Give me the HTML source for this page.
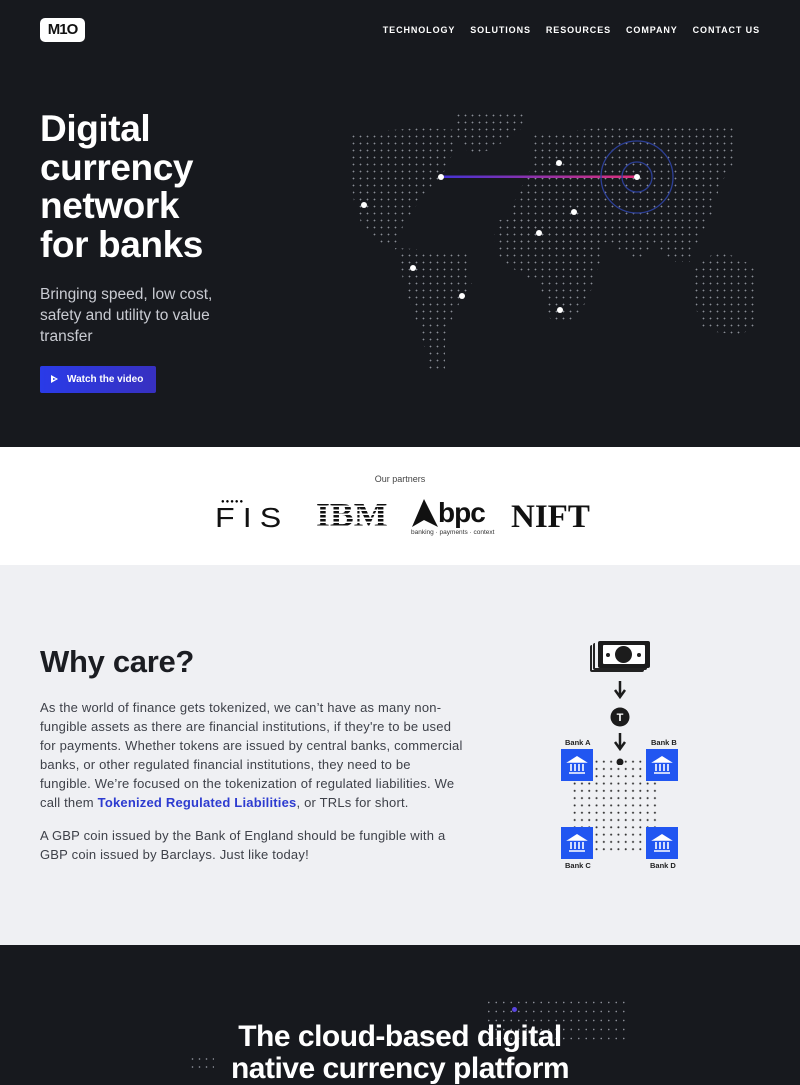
<!DOCTYPE html>
<html><head><meta charset="utf-8"><style>
*{margin:0;padding:0;box-sizing:border-box}
body{width:800px;height:1069px;overflow:hidden;font-family:"Liberation Sans",sans-serif;background:#17191e}
.hero{position:relative;height:447px;background:#17191e;color:#fff}
.logo{position:absolute;left:40px;top:18px;width:45px;height:24px;background:#fff;border-radius:5px;color:#111;font-weight:bold;font-size:15px;text-align:center;line-height:24px;letter-spacing:-1px}
.nav{position:absolute;right:40px;top:25px;font-size:9px;font-weight:bold;letter-spacing:0.9px}
.nav span{margin-left:15px}
h1{position:absolute;left:40px;top:110px;font-size:37px;line-height:38.5px;letter-spacing:-0.4px;font-weight:bold}
.sub{position:absolute;left:40px;top:284px;font-size:15.5px;line-height:21px;color:#c9cbd2;width:200px}
.btn{position:absolute;left:40px;top:366px;width:116px;height:27px;background:linear-gradient(90deg,#2a3be8,#3730c0);border-radius:2px;font-size:10px;font-weight:bold;line-height:27px;padding-left:27px}
.btn:before{content:"";position:absolute;left:11px;top:9px;border-left:7px solid #fff;border-top:4.5px solid transparent;border-bottom:4.5px solid transparent}
.btn:after{content:"";position:absolute;left:13px;top:12px;border-left:3px solid #2a3be8;border-top:1.5px solid transparent;border-bottom:1.5px solid transparent}
.land{position:absolute;left:0;top:0;width:800px;height:447px;background-image:radial-gradient(circle,#8a8d96 0.7px,transparent 1px);background-size:7px 7px;background-position:0 0}
.pt{position:absolute;width:6px;height:6px;border-radius:50%;background:#fff;margin:-3px 0 0 -3px}
.partners{height:118px;background:#fff;position:relative}
.wc{height:380px;background:#eff0f3;position:relative;color:#1b1d22}
.p{position:absolute;left:40px;font-size:13px;line-height:19px;color:#3e4149;white-space:nowrap;letter-spacing:0.2px}
.bank{position:absolute;width:32px;height:32px;background:#2156f1}
.bl{position:absolute;font-size:7.5px;font-weight:bold;color:#222}
</style></head><body>
<div class="hero">
<div class="logo">M1O</div>
<div class="nav"><span>TECHNOLOGY</span><span>SOLUTIONS</span><span>RESOURCES</span><span>COMPANY</span><span>CONTACT US</span></div>
<div class="land" style="clip-path:polygon(348px 133px,420px 128px,460px 130px,452px 155px,440px 180px,420px 200px,405px 222px,395px 245px,380px 245px,365px 230px,355px 210px,350px 170px)"></div>
<div class="land" style="clip-path:polygon(455px 112px,525px 112px,520px 132px,490px 150px,470px 155px,455px 135px)"></div>
<div class="land" style="clip-path:polygon(395px 248px,470px 252px,472px 285px,455px 310px,445px 340px,445px 370px,430px 370px,420px 330px,405px 290px,400px 265px)"></div>
<div class="land" style="clip-path:polygon(530px 135px,600px 128px,735px 128px,738px 155px,720px 185px,712px 215px,700px 235px,690px 262px,670px 262px,655px 245px,640px 260px,620px 250px,610px 240px,590px 250px,560px 250px,520px 245px,510px 210px,530px 170px)"></div>
<div class="land" style="clip-path:polygon(495px 220px,605px 218px,600px 262px,588px 300px,570px 322px,552px 325px,540px 285px,502px 262px,494px 240px)"></div>
<div class="land" style="clip-path:polygon(695px 265px,720px 250px,758px 268px,758px 325px,740px 335px,700px 330px,695px 300px)"></div>
<svg style="position:absolute;left:0;top:0" width="800" height="447"><defs><linearGradient id="g" x1="0" x2="1"><stop offset="0" stop-color="#4433d6"/><stop offset="1" stop-color="#e0307a"/></linearGradient></defs>
<rect x="441" y="175.5" width="196" height="2.5" fill="url(#g)"/>
<circle cx="637" cy="177" r="36" fill="none" stroke="#2c3f96" stroke-width="1.3"/>
<circle cx="637" cy="177" r="15" fill="none" stroke="#2c3f96" stroke-width="1.3"/></svg>
<div class="pt" style="left:441px;top:177px"></div><div class="pt" style="left:637px;top:177px"></div>
<div class="pt" style="left:559px;top:163px"></div><div class="pt" style="left:364px;top:205px"></div>
<div class="pt" style="left:574px;top:212px"></div><div class="pt" style="left:539px;top:233px"></div>
<div class="pt" style="left:413px;top:268px"></div><div class="pt" style="left:462px;top:296px"></div>
<div class="pt" style="left:560px;top:310px"></div>
<h1>Digital<br>currency<br>network<br>for banks</h1>
<div class="sub">Bringing speed, low cost, safety and utility to value transfer</div>
<div class="btn">Watch the video</div>
</div>
<div class="partners">
<div style="position:absolute;top:27px;width:800px;text-align:center;font-size:9px;color:#444">Our partners</div>
<div style="position:absolute;left:221px;top:52px;font-size:6px;letter-spacing:1px">●●●●●</div>
<div style="position:absolute;left:215px;top:55px;font-size:28px;letter-spacing:7px;color:#111;transform:scaleX(1.15);transform-origin:left">FIS</div>
<div style="position:absolute;left:316px;top:53px;font-family:'Liberation Serif',serif;font-size:34px;font-weight:bold;color:#111;line-height:32px;transform:scaleX(1.05);transform-origin:left">IBM</div>
<div style="position:absolute;left:314px;top:56px;width:72px;height:28px;background:repeating-linear-gradient(transparent 0 2.5px,#fff 2.5px 4px)"></div>
<svg style="position:absolute;left:410px;top:52px" width="30" height="30"><path d="M14 0 L28 28 L14 21 L2 28 Z" fill="#111"/></svg>
<div style="position:absolute;left:438px;top:50px;font-size:28px;font-weight:bold;color:#111;letter-spacing:-1px">bpc</div>
<div style="position:absolute;left:411px;top:82px;font-size:6.5px;color:#333">banking · payments · context</div>
<div style="position:absolute;left:511px;top:52px;font-family:'Liberation Serif',serif;font-size:33px;font-weight:bold;color:#111">NIFT</div>
</div>
<div class="wc">
<div style="position:absolute;left:40px;top:79px;font-size:31px;font-weight:bold;letter-spacing:-0.3px">Why care?</div>
<div class="p" style="top:133px">As the world of finance gets tokenized, we can’t have as many non-<br>fungible assets as there are financial institutions, if they're to be used<br>for payments. Whether tokens are issued by central banks, commercial<br>banks, or other regulated financial institutions, they need to be<br>fungible. We’re focused on the tokenization of regulated liabilities. We<br>call them <b style="color:#2d3bd0">Tokenized Regulated Liabilities</b>, or TRLs for short.</div>
<div class="p" style="top:261px">A GBP coin issued by the Bank of England should be fungible with a<br>GBP coin issued by Barclays. Just like today!</div>
<div style="position:absolute;left:571px;top:193px;width:90px;height:93px;background-image:radial-gradient(circle,#333 0.8px,transparent 1.2px);background-size:7.3px 7.3px"></div>
<div style="position:absolute;left:590px;top:80px;width:54px;height:27px;background:#222;border-radius:2px"></div>
<div style="position:absolute;left:592px;top:78px;width:54px;height:27px;background:#eff0f3"></div>
<div style="position:absolute;left:593px;top:78px;width:54px;height:27px;background:#222;border-radius:2px"></div>
<div style="position:absolute;left:595px;top:76px;width:55px;height:27px;background:#eff0f3"></div>
<div style="position:absolute;left:598px;top:76px;width:52px;height:27px;background:#1c1c1c;border-radius:2px"></div>
<div style="position:absolute;left:603px;top:80px;width:42px;height:19px;background:#fff;border-radius:1px"></div>
<div style="position:absolute;left:615px;top:81px;width:17px;height:17px;background:#1c1c1c;border-radius:50%"></div>
<div style="position:absolute;left:606px;top:88px;width:4px;height:4px;background:#1c1c1c;border-radius:50%"></div>
<div style="position:absolute;left:637px;top:88px;width:4px;height:4px;background:#1c1c1c;border-radius:50%"></div>
<svg style="position:absolute;left:600px;top:110px" width="40" height="90"><path d="M20 6V20M15 15L20 22L25 15" stroke="#1c1c1c" stroke-width="2.5" fill="none"/><circle cx="20" cy="42" r="9.5" fill="#1c1c1c"/><text x="20" y="46" font-size="11" font-weight="bold" fill="#fff" text-anchor="middle" font-family="Liberation Sans">T</text><path d="M20 58V72M15 67L20 74L25 67" stroke="#1c1c1c" stroke-width="2.5" fill="none"/><circle cx="20" cy="87" r="3.5" fill="#1c1c1c"/></svg>
<div class="bl" style="left:565px;top:173px">Bank A</div><div class="bl" style="left:651px;top:173px">Bank B</div>
<div class="bl" style="left:565px;top:296px">Bank C</div><div class="bl" style="left:650px;top:296px">Bank D</div>
<div class="bank" style="left:561px;top:184px"></div><div class="bank" style="left:646px;top:184px"></div>
<div class="bank" style="left:561px;top:262px"></div><div class="bank" style="left:646px;top:262px"></div>
<svg style="position:absolute;left:561px;top:184px" width="117" height="110"><g id="b" fill="none" stroke="#fff" stroke-width="1.6"><path d="M8 13L16 8L24 13Z" fill="#fff"/><path d="M10 15V22M14 15V22M18 15V22M22 15V22M8 24H24"/></g><use href="#b" x="85"/><use href="#b" y="78"/><use href="#b" x="85" y="78"/></svg>
</div>
<div style="position:relative;height:124px;background:#17191e">
<div style="position:absolute;left:485px;top:53px;width:145px;height:45px;background-image:radial-gradient(circle,#8a8d96 0.6px,transparent 1px);background-size:7.5px 9px"></div>
<div style="position:absolute;left:189px;top:110px;width:25px;height:14px;background-image:radial-gradient(circle,#8a8d96 0.6px,transparent 1px);background-size:7px 8px"></div>
<div style="position:absolute;left:512px;top:62px;width:5px;height:5px;border-radius:50%;background:#5a45e0"></div>
<div style="position:absolute;top:76px;width:800px;text-align:center;color:#fff;font-size:30px;font-weight:bold;line-height:32px;letter-spacing:-0.5px">The cloud-based digital<br>native currency platform</div>
</div>
</body></html>
